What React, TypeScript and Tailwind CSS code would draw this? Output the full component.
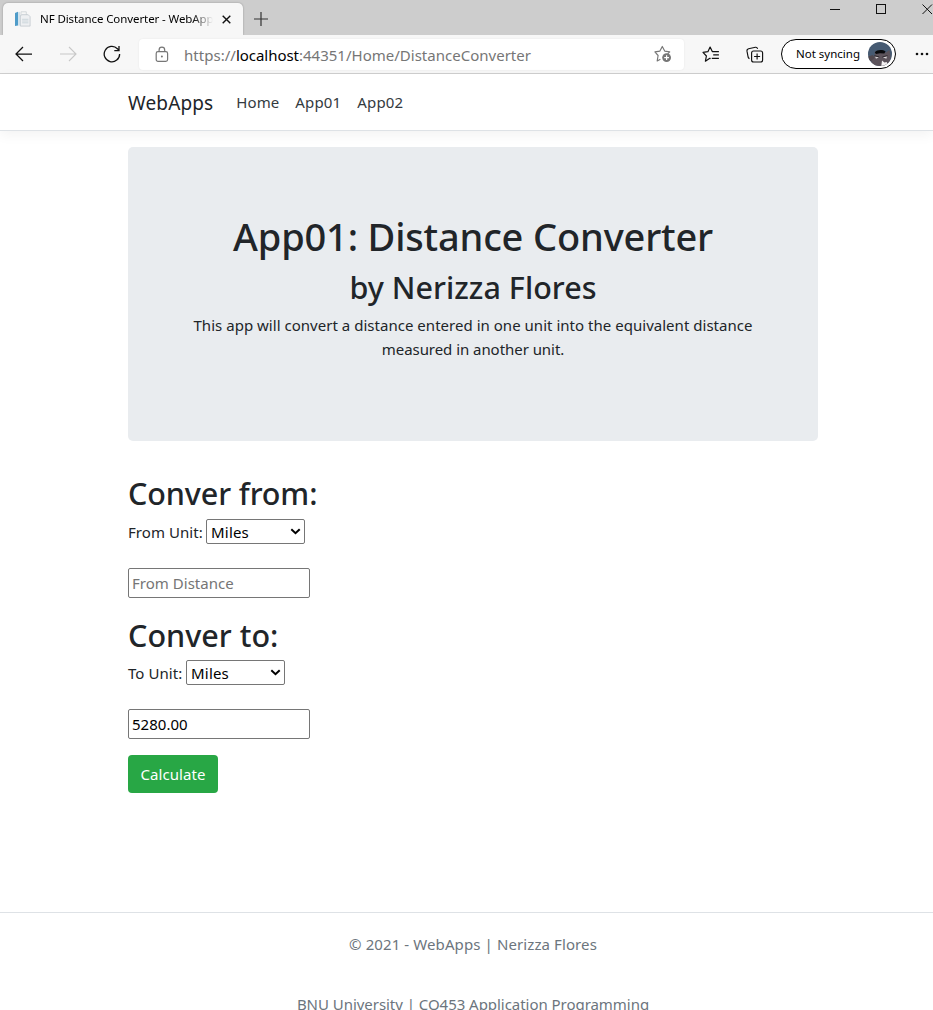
import React from 'react';

function BackIcon() {
  return (
    <svg width="18" height="16" viewBox="0 0 18 16" fill="none" stroke="currentColor" strokeWidth="1.25">
      <path d="M17 8H1.2M8 1 1 8l7 7" />
    </svg>
  );
}

function ForwardIcon() {
  return (
    <svg width="18" height="16" viewBox="0 0 18 16" fill="none" stroke="currentColor" strokeWidth="1.1">
      <path d="M1 8h15.8M10 1l7 7-7 7" />
    </svg>
  );
}

function ReloadIcon() {
  return (
    <svg width="18" height="18" viewBox="0 0 18 18" fill="none" stroke="currentColor" strokeWidth="1.3">
      <path d="M16.6 8.9A7.7 7.7 0 1 1 14.4 3.7L15.6 5.2M16 1v4.6h-4.7" />
    </svg>
  );
}

function LockIcon() {
  return (
    <svg width="14" height="17" viewBox="0 0 14 17" fill="none" stroke="#767676" strokeWidth="1.2">
      <rect x="1.2" y="5.6" width="11.4" height="9.8" rx="1.8" />
      <path d="M4.1 5.6V3.9a2.8 2.8 0 0 1 5.6 0v1.7" />
      <circle cx="6.9" cy="10.4" r="1" fill="#767676" stroke="none" />
    </svg>
  );
}

function AddFavoriteIcon() {
  return (
    <svg width="18" height="18" viewBox="0 0 18 18" fill="none">
      <path
        d="M6.4 14.2 3.2 15.9l.9-5.4L.9 6.9l5-.8L8.3 1.4l2.4 4.7 5 .8-2 2"
        stroke="#767676"
        strokeWidth="1.15"
        strokeLinejoin="round"
      />
      <circle cx="12.6" cy="12.6" r="4.4" fill="#767676" />
      <path d="M12.6 10.2V15M10.2 12.6H15" stroke="#fff" strokeWidth="1.2" />
    </svg>
  );
}

function FavoritesIcon() {
  return (
    <svg width="18" height="17" viewBox="0 0 18 17" fill="none" stroke="#111" strokeWidth="1.2" strokeLinejoin="round">
      <path d="M8.6 12.6 7.8 12.3 3.4 15.2 4.4 10 1 6.4l4.9-.7L8.1 1.1l2.2 4.5h6.6" />
      <path d="M11.2 8.9h5.7M9.8 12.4h7.1" />
    </svg>
  );
}

function CollectionsIcon() {
  return (
    <svg width="18" height="17" viewBox="0 0 18 17" fill="none" stroke="#111" strokeWidth="1.15">
      <path d="M3.5 12.6C2.6 12.3 2.3 11.8 2.1 11L1 5.2C.8 3.9 1.3 3 2.6 2.7L9.4 1.3c1-.2 1.8.2 2.2 1.5" />
      <rect x="5.6" y="5" width="11" height="11" rx="2" />
      <path d="M11.1 7.5v6M8.1 10.5h6" />
    </svg>
  );
}

function PageIcon() {
  return (
    <svg width="17" height="17" viewBox="0 0 17 17">
      <path d="M1 2 4 .8v13.6L1 14.9z" fill="#4f9cc9" />
      <path d="M4 1.2 6 .8v13.6l-2 .3z" fill="#d3e4ee" />
      <path d="M7 .8h5.3v5H7z" fill="#f6f6f6" stroke="#c6cdd1" strokeWidth=".7" />
      <path d="M6.4 4.6 8 3.7h6.2l1.9 2v9.4H6.4z" fill="#eef0f2" stroke="#b9c2c8" strokeWidth=".7" />
      <path d="M8.1 8.3h6.3M8.1 10h6.3M8.1 11.8h6.3" stroke="#c4cfd6" strokeWidth=".8" />
    </svg>
  );
}

function Avatar() {
  return (
    <svg width="24" height="24" viewBox="0 0 24 24">
      <defs>
        <clipPath id="avatar">
          <circle cx="12" cy="12" r="12" />
        </clipPath>
      </defs>
      <g clipPath="url(#avatar)">
        <path d="M0 0h24v24H0z" fill="#465a72" />
        <path d="M4 24 3 17l3.5-3L7 9l3 1.5h8L21.5 8l1 7L21 24z" fill="#5d545c" />
        <path d="M6.8 10.4c2-2.8 7.6-3.2 10.8-1l-1.3 2.1-4.3-.3-4 .8z" fill="#08090c" />
        <path d="M0 14.5 5 13l1.5 3L3 19l-3-.5z" fill="#51484e" />
        <path d="m7 14.4 4 .8-3 1.5zM14.8 15.2l4.2-1-.6 2.6z" fill="#d5d1d3" />
        <path d="M6.5 13.7 11.3 15M14.4 15l5-1.4" stroke="#211d22" strokeWidth=".8" />
        <path d="m14 18.6 2.4 2 2.4-.6.5 4h-6z" fill="#f4f2f3" />
      </g>
    </svg>
  );
}

function TitleBar() {
  return (
    <div className="flex h-[35px] shrink-0 items-end bg-[#cdcdcd] pl-[3px]">
      <div className="flex h-8 w-60 items-center rounded-t-[5px] bg-[#f7f7f7] pl-[11px] shadow-[0_0_2px_rgba(0,0,0,0.3)]">
        <PageIcon />
        <div className="ml-[9px] w-[173px] overflow-hidden whitespace-nowrap bg-linear-to-r from-black from-88% to-transparent bg-clip-text text-[11.5px] leading-5 tracking-[-0.09px] text-transparent">
          NF Distance Converter - WebApps
        </div>
        <svg className="ml-[9px]" width="9" height="9" viewBox="0 0 9 9" stroke="#111" strokeWidth="1.4">
          <path d="m.7.7 7.6 7.6M8.3.7.7 8.3" />
        </svg>
      </div>
      <svg className="mb-[9px] ml-[11px]" width="14" height="14" viewBox="0 0 14 14" stroke="#333" strokeWidth="1.2">
        <path d="M7 0v14M0 7h14" />
      </svg>
      <div className="ml-auto flex self-start pt-1">
        <svg width="103" height="11" viewBox="0 0 103 11" fill="none" stroke="#111">
          <path d="M0 5.5h10M92.5 .5l9.5 9.5M102 .5 92.5 10" />
          <rect x="46.5" y=".5" width="9" height="9" />
        </svg>
      </div>
    </div>
  );
}

function Toolbar() {
  return (
    <div className="flex h-[39px] shrink-0 items-center border-b border-[#cfcfcf] bg-[#f7f7f7] pl-[15px] text-[#111]">
      <BackIcon />
      <span className="ml-[26px] text-[#c8c8c8]">
        <ForwardIcon />
      </span>
      <span className="ml-[26px]">
        <ReloadIcon />
      </span>
      <div className="ml-[18px] flex h-[31px] w-[545px] items-center rounded-[4px] bg-white pl-4 pr-3 shadow-[0_0_2px_rgba(0,0,0,0.08)]">
        <LockIcon />
        <div className="ml-[15px] flex-1 whitespace-nowrap pt-px text-[15px] leading-6 text-[#767676]">
          <span className="tracking-[0.03px]">https://</span>
          <span className="tracking-[-0.04px] text-black">localhost</span>
          <span className="tracking-[0.01px]">:44351/Home/DistanceConverter</span>
        </div>
        <AddFavoriteIcon />
      </div>
      <span className="ml-[18px]">
        <FavoritesIcon />
      </span>
      <span className="ml-[26px]">
        <CollectionsIcon />
      </span>
      <div className="ml-[17px] flex h-[30px] w-[115px] items-center justify-between rounded-full border border-black bg-white pl-[14px] pr-[3px]">
        <span className="whitespace-nowrap text-[11.5px] leading-5 text-black">Not syncing</span>
        <Avatar />
      </div>
      <svg className="ml-[19px]" width="14" height="4" viewBox="0 0 14 4" fill="#111">
        <circle cx="2" cy="2" r="1.3" />
        <circle cx="7" cy="2" r="1.3" />
        <circle cx="12" cy="2" r="1.3" />
      </svg>
    </div>
  );
}

function UnitSelect({ id }: { id: string }) {
  return (
    <div className="relative h-[25px] w-[99px]">
      <select
        id={id}
        className="h-full w-full appearance-none rounded-[2px] border border-[#767676] bg-white pl-1 text-[15px] tracking-[0.2px] text-black"
      >
        <option>Miles</option>
      </select>
      <svg
        className="pointer-events-none absolute right-1 top-[9px]"
        width="11"
        height="8"
        viewBox="0 0 11 8"
        fill="none"
        stroke="#000"
        strokeWidth="2"
      >
        <path d="m1.3 1.2 4.2 4 4.2-4" />
      </svg>
    </div>
  );
}

const heading = 'text-[30.5px] font-medium leading-[38px]';
const field =
  'block h-[30px] w-[182px] rounded-[2px] border border-[#767676] bg-white pl-[3px] text-[15px] text-black placeholder:text-[#757575]';

export default function App() {
  return (
    <div className="flex h-[1010px] w-full flex-col overflow-hidden bg-white font-['Noto_Sans',sans-serif] text-[15px] leading-6 text-[#212529]">
      <TitleBar />
      <Toolbar />
      <nav className="flex h-[57px] shrink-0 items-center border-b border-[#dee2e6] pl-32 text-[#343a40] shadow-[0_4px_12px_rgba(0,0,0,0.05)]">
        <span className="mt-0.5 text-[19px] tracking-[0.15px] text-[#212529]">WebApps</span>
        <span className="ml-[23px] tracking-[0.08px]">Home</span>
        <span className="ml-4 tracking-[0.16px]">App01</span>
        <span className="ml-4 tracking-[0.16px]">App02</span>
      </nav>
      <main className="ml-32 w-[690px] shrink-0">
        <section className="mt-4 h-[294px] rounded-[5px] bg-[#e9ecef] pt-[65px] text-center">
          <h1 className="text-[38px] font-medium leading-[48px] tracking-[-0.17px]">App01: Distance Converter</h1>
          <h2 className={`${heading} mt-2 tracking-[0.02px]`}>by Nerizza Flores</h2>
          <p className="mt-[7px] whitespace-nowrap tracking-[0.025px]">
            This app will convert a distance entered in one unit into the equivalent distance
            <br />
            <span className="tracking-[-0.05px]">measured in another unit.</span>
          </p>
        </section>
        <form>
          <h2 className={`${heading} mt-[33px] tracking-[-0.1px]`}>Conver from:</h2>
          <div className="mt-[7px] flex items-center">
            <label htmlFor="from" className="w-[78px] tracking-[0.06px]">
              From Unit:
            </label>
            <UnitSelect id="from" />
          </div>
          <input className={`${field} mt-6 tracking-[0.02px]`} placeholder="From Distance" />
          <h2 className={`${heading} mt-[18px] tracking-[0.02px]`}>Conver to:</h2>
          <div className="mt-[6px] flex items-center">
            <label htmlFor="to" className="w-[58px] tracking-[0.05px]">
              To Unit:
            </label>
            <UnitSelect id="to" />
          </div>
          <input className={`${field} mt-6 tracking-[0.02px]`} defaultValue="5280.00" />
          <button
            type="button"
            className="mt-4 block h-[38px] w-[90px] rounded-[4px] bg-[#28a745] tracking-[0.07px] text-white"
          >
            Calculate
          </button>
        </form>
      </main>
      <footer className="mt-[119px] flex shrink-0 flex-col items-center gap-9 border-t border-[#dee2e6] pl-[13px] pt-[19px] text-[#6c757d]">
        <div className="tracking-[0.1px]">© 2021 - WebApps | Nerizza Flores</div>
        <div className="tracking-[-0.04px]">BNU University | CO453 Application Programming</div>
      </footer>
    </div>
  );
}
